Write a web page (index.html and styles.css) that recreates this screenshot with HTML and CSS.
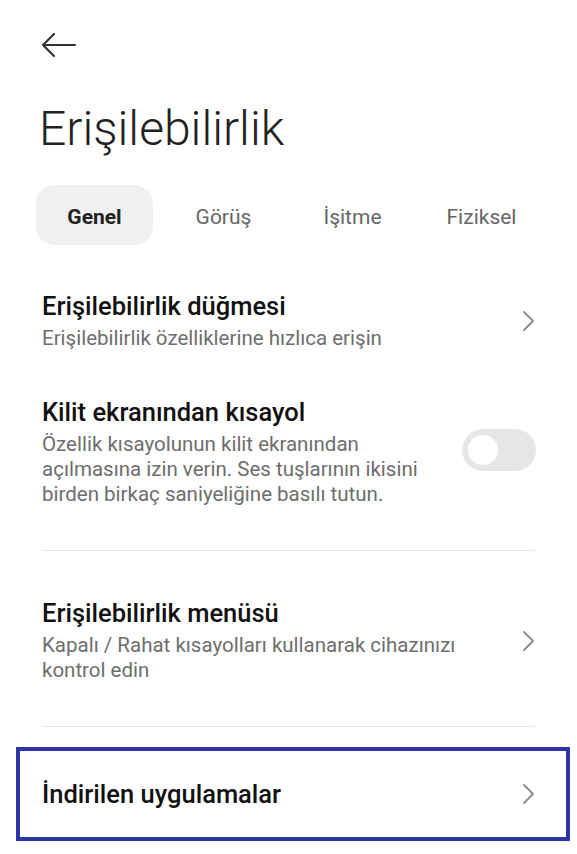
FILE: index.html
```html
<!DOCTYPE html>
<html lang="tr">
<head>
<meta charset="utf-8">
<title>Erişilebilirlik</title>
<link rel="stylesheet" href="styles.css">
</head>
<body>
<div class="page">
  <header class="topbar">
    <svg class="back" width="36" height="26" viewBox="0 0 36 26" aria-label="Geri">
      <path d="M2 13 H34 M13 2 L2 13 L13 24" fill="none" stroke="#333" stroke-width="2.2" stroke-linecap="round" stroke-linejoin="round"/>
    </svg>
  </header>
  <h1 class="page-title">Erişilebilirlik</h1>
  <nav class="tabs">
    <div class="tab active">Genel</div>
    <div class="tab">Görüş</div>
    <div class="tab">İşitme</div>
    <div class="tab">Fiziksel</div>
  </nav>
  <div class="list">
    <div class="item">
      <div class="text">
        <div class="item-title">Erişilebilirlik düğmesi</div>
        <div class="item-sub">Erişilebilirlik özelliklerine hızlıca erişin</div>
      </div>
      <svg class="chev" width="14" height="22" viewBox="0 0 14 22"><path d="M3 2 L12 11 L3 20" fill="none" stroke="#8a8a8a" stroke-width="1.8" stroke-linecap="round" stroke-linejoin="round"/></svg>
    </div>
    <div class="item">
      <div class="text">
        <div class="item-title">Kilit ekranından kısayol</div>
        <div class="item-sub">Özellik kısayolunun kilit ekranından açılmasına izin verin. Ses tuşlarının ikisini birden birkaç saniyeliğine basılı tutun.</div>
      </div>
      <div class="toggle"><div class="knob"></div></div>
    </div>
    <div class="divider"></div>
    <div class="item">
      <div class="text">
        <div class="item-title">Erişilebilirlik menüsü</div>
        <div class="item-sub">Kapalı / Rahat kısayolları kullanarak cihazınızı kontrol edin</div>
      </div>
      <svg class="chev" width="14" height="22" viewBox="0 0 14 22"><path d="M3 2 L12 11 L3 20" fill="none" stroke="#8a8a8a" stroke-width="1.8" stroke-linecap="round" stroke-linejoin="round"/></svg>
    </div>
    <div class="divider second"></div>
    <div class="item highlighted">
      <div class="text">
        <div class="item-title">İndirilen uygulamalar</div>
      </div>
      <svg class="chev" width="14" height="22" viewBox="0 0 14 22"><path d="M3 2 L12 11 L3 20" fill="none" stroke="#8a8a8a" stroke-width="1.8" stroke-linecap="round" stroke-linejoin="round"/></svg>
    </div>
  </div>
</div>
</body>
</html>
```
FILE: styles.css
```css
* { box-sizing: border-box; }
html, body { margin: 0; padding: 0; background: #fff; }
body {
  font-family: Roboto, "Noto Sans", "Liberation Sans", sans-serif;
  color: #111;
  width: 577px;
  height: 854px;
  overflow: hidden;
}
.topbar {
  height: 90px;
  display: flex;
  align-items: center;
  padding-left: 41px;
}
.back { display: block; }
.page-title {
  margin: 11px 0 0 0;
  padding-left: 39px;
  font-size: 48px;
  line-height: 56px;
  font-weight: 300;
  color: #222;
}
.tabs {
  display: flex;
  gap: 12px;
  padding-left: 36px;
  margin-top: 28px;
}
.tab {
  width: 117px;
  height: 60px;
  border-radius: 19px;
  display: flex;
  align-items: center;
  justify-content: center;
  padding-top: 3px;
  font-size: 21px;
  color: #666;
  font-weight: 400;
}
.tab.active {
  background: #f0f0f0;
  color: #222;
  font-weight: 700;
}
.list {
  margin-top: 23px;
  padding: 0 42px;
}
.item {
  display: flex;
  align-items: center;
  justify-content: space-between;
  padding: 23px 0;
}
.text { flex: 1 1 auto; min-width: 0; max-width: 422px; }
.item-title {
  font-size: 25.5px;
  line-height: 30px;
  font-weight: 500;
  color: #111;
  margin-bottom: 5px;
}
.item-sub {
  font-size: 20.5px;
  line-height: 25px;
  color: #6e6e6e;
}
.chev { flex: none; display: block; }
.toggle {
  flex: none;
  width: 74px;
  height: 42px;
  border-radius: 21px;
  background: #e6e6e6;
  padding: 6px;
  margin-right: -1px;
  margin-top: -4px;
}
.knob {
  width: 30px;
  height: 30px;
  border-radius: 50%;
  background: #fff;
}
.divider {
  height: 1px;
  background: #e6e6e6;
  margin: 20px 0 24px;
}
.divider.second { margin: 20px 0 20px; }
.highlighted {
  margin: 0 -35px 0 -26px;
  border: 4px solid #2e35a6;
  padding: 28px 31px 28px 22px;
}
.highlighted .item-title { margin-bottom: 0; }
```
